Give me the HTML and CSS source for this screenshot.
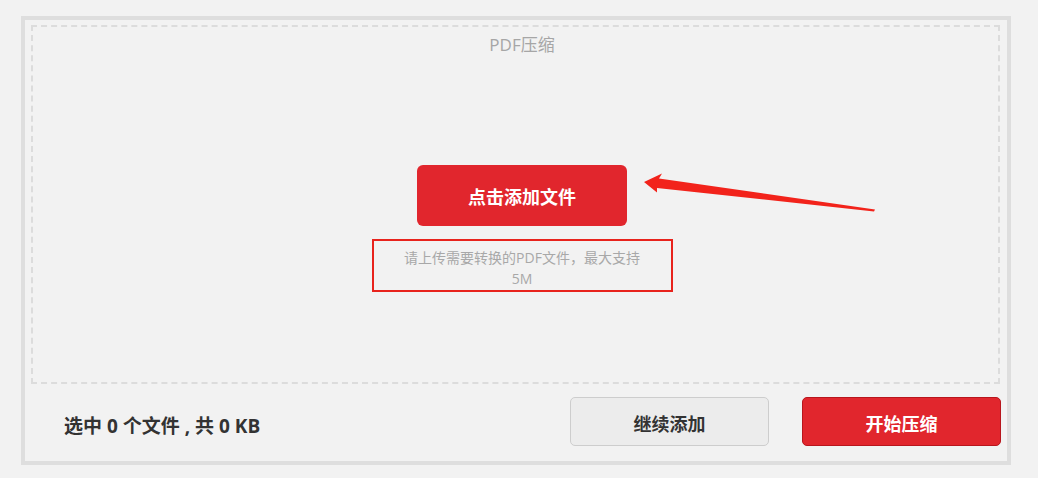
FILE: index.html
```html
<!DOCTYPE html>
<html lang="zh-CN">
<head>
<meta charset="utf-8">
<title>PDF压缩</title>
<link rel="stylesheet" href="styles.css">
</head>
<body>
<div class="panel">
  <div class="dropzone">
    <div class="title">PDF压缩</div>
    <button class="add-btn">点击添加文件</button>
    <div class="note"><p class="note-text">请上传需要转换的PDF文件，最大支持5M</p></div>
  </div>
  <div class="footer">
    <div class="summary">选中 0 个文件 , 共 0 KB</div>
    <div class="actions">
      <button class="btn btn-light">继续添加</button>
      <button class="btn btn-red">开始压缩</button>
    </div>
  </div>
</div>
<svg class="arrow" width="1038" height="478" viewBox="0 0 1038 478">
  <polygon points="644,182 662,173.5 659,178.5 875,209.5 874,211.5 657,188 657,192.5" fill="#f2231b"/>
</svg>
</body>
</html>
```
FILE: styles.css
```css
html, body {
  margin: 0;
  padding: 0;
}
body {
  background: #f2f2f2;
  font-family: "Open Sans", "Noto Sans CJK SC", sans-serif;
  padding: 16px 0 0 21px;
  position: relative;
  height: 478px;
  box-sizing: border-box;
  overflow: hidden;
}
.panel {
  width: 990px;
  height: 449px;
  box-sizing: border-box;
  border: 4px solid #dedede;
  padding: 5px 7px 0 6px;
  background: #f2f2f2;
  display: flex;
  flex-direction: column;
}
.dropzone {
  height: 359px;
  box-sizing: border-box;
  border: 2px dashed #dcdcdc;
  padding: 6px 0 0 13px;
  display: flex;
  flex-direction: column;
  align-items: center;
}
.title {
  font-size: 17px;
  line-height: 24px;
  color: #a6a6a6;
}
.add-btn {
  margin-top: 108px;
  width: 210px;
  height: 61px;
  border: none;
  border-radius: 6px;
  background: #e1262d;
  color: #fff;
  font-family: inherit;
  font-size: 18px;
  font-weight: 700;
  padding: 0;
}
.note {
  margin-top: 13px;
  width: 301px;
  height: 53px;
  box-sizing: border-box;
  border: 2px solid #e8231d;
  padding-top: 6px;
  display: flex;
  justify-content: center;
}
.note-text {
  margin: 0;
  width: 248px;
  text-align: center;
  font-size: 14px;
  line-height: 21px;
  color: #a8a8a8;
}
.footer {
  flex: 1;
  display: flex;
  align-items: center;
  justify-content: space-between;
  padding: 13px 0 15px 33px;
  margin-right: -1px;
  box-sizing: border-box;
}
.summary {
  font-size: 19px;
  font-weight: 700;
  color: #333;
  padding-top: 6px;
}
.actions {
  display: flex;
  gap: 33px;
}
.btn {
  width: 199px;
  height: 49px;
  box-sizing: border-box;
  border-radius: 5px;
  font-family: inherit;
  font-size: 18px;
  font-weight: 700;
  padding: 3px 0 0;
}
.btn-light {
  background: #ececec;
  border: 1px solid #cdcdcd;
  color: #333;
}
.btn-red {
  background: #e1262d;
  border: 1px solid #b8161d;
  color: #fff;
}
.arrow {
  position: absolute;
  left: 0;
  top: 0;
  pointer-events: none;
}
```
